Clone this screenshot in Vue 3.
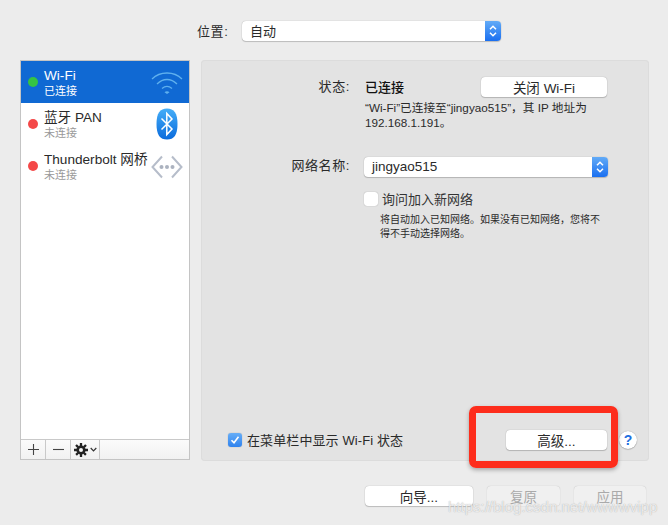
<script setup>
const services = [
  { id: 'wifi', name: 'Wi-Fi', status: '已连接', on: true, active: true },
  { id: 'bt', name: '蓝牙 PAN', status: '未连接', on: false, active: false },
  { id: 'bridge', name: 'Thunderbolt 网桥', status: '未连接', on: false, active: false }
]
</script>

<template>
  <div class="window">
    <div class="location">
      <span class="location-label">位置:</span>
      <div class="select location-select">
        <span class="select-text">自动</span>
        <span class="stepper">
          <svg width="10" height="14" viewBox="0 0 10 14"><path d="M2 5.2 5 2.2 8 5.2M2 8.8 5 11.8 8 8.8" fill="none" stroke="#fff" stroke-width="1.5" /></svg>
        </span>
      </div>
    </div>

    <div class="main">
      <div class="sidebar">
        <ul class="services">
          <li v-for="s in services" :key="s.id" class="service" :class="{ active: s.active }">
            <span class="dot" :class="{ on: s.on }"></span>
            <div class="service-text">
              <div class="service-name">{{ s.name }}</div>
              <div class="service-status">{{ s.status }}</div>
            </div>
            <span class="service-icon">
              <svg v-if="s.id === 'wifi'" width="32" height="26" viewBox="0 0 32 26">
                <g fill="none" stroke="#5fb0ee" stroke-width="1.3">
                  <path d="M1 10C9 2 23 2 31 10" />
                  <path d="M6 15C12 9 20 9 26 15" />
                  <path d="M11 19.5C14 17 18 17 21 19.5" />
                </g>
                <path d="M13.5 23.2C15 22 17 22 18.5 23.2L16 25Z" fill="#5fb0ee" />
              </svg>
              <svg v-else-if="s.id === 'bt'" width="22" height="32" viewBox="0 0 22 32">
                <defs>
                  <linearGradient id="btFill" x1="0" y1="0" x2="0" y2="1">
                    <stop offset="0" stop-color="#45aef8" />
                    <stop offset="1" stop-color="#0a6bdc" />
                  </linearGradient>
                </defs>
                <path d="M11 .5C18 .5 21.5 5 21.5 16S18 31.5 11 31.5.5 27 .5 16 4 .5 11 .5Z" fill="url(#btFill)" />
                <path d="M5.5 10.5 16 21 10.8 26.5V5.5L16 11 5.5 21.5" fill="none" stroke="#fff" stroke-width="1.5" />
              </svg>
              <svg v-else class="bridge-icon" width="32" height="24" viewBox="0 0 32 24">
                <path d="M11 1.5 1.5 12 11 22.5M21 1.5 30.5 12 21 22.5" fill="none" stroke="#b6bdca" stroke-width="2" />
                <circle cx="10.5" cy="12" r="2" fill="#abb2bf" />
                <circle cx="16" cy="12" r="2" fill="#abb2bf" />
                <circle cx="21.5" cy="12" r="2" fill="#abb2bf" />
              </svg>
            </span>
          </li>
        </ul>
        <div class="toolbar">
          <span class="tool tool-small">
            <svg width="11" height="11" viewBox="0 0 11 11"><path d="M5.5 0V11M0 5.5H11" stroke="#444" stroke-width="1.1" /></svg>
          </span>
          <span class="tool tool-small">
            <svg width="11" height="11" viewBox="0 0 11 11"><path d="M0 5.5H11" stroke="#444" stroke-width="1.1" /></svg>
          </span>
          <span class="tool tool-gear">
            <svg width="14" height="14" viewBox="0 0 14 14">
              <circle cx="7" cy="7" r="3.3" fill="none" stroke="#222" stroke-width="2.6" />
              <path d="M7 0V14M0 7H14M2 2 12 12M12 2 2 12" stroke="#222" stroke-width="2.3" stroke-dasharray="3 8 3" />
            </svg>
            <svg width="7" height="5" viewBox="0 0 7 5"><path d="M.7 1 3.5 3.8 6.3 1" fill="none" stroke="#333" stroke-width="1.2" /></svg>
          </span>
        </div>
      </div>

      <div class="panel">
        <div class="form">
          <span class="field-label status-label">状态:</span>
          <div class="status-line">
            <span class="status-value">已连接</span>
            <button class="btn wifi-btn">关闭 Wi-Fi</button>
          </div>
          <p class="status-desc">“Wi-Fi”已连接至“jingyao515”&#65292;其 IP 地址为<br />192.168.1.191。</p>

          <span class="field-label network-label">网络名称:</span>
          <div class="select network-select">
            <span class="select-text network-text">jingyao515</span>
            <span class="stepper">
              <svg width="10" height="14" viewBox="0 0 10 14"><path d="M2 5.2 5 2.2 8 5.2M2 8.8 5 11.8 8 8.8" fill="none" stroke="#fff" stroke-width="1.5" /></svg>
            </span>
          </div>

          <div class="ask">
            <span class="checkbox"></span>
            <span class="ask-text">询问加入新网络</span>
          </div>
          <p class="ask-desc">将自动加入已知网络。如果没有已知网络&#65292;您将不<br />得不手动选择网络。</p>
        </div>

        <div class="panel-bottom">
          <span class="checkbox checked">
            <svg width="10" height="10" viewBox="0 0 10 10"><path d="M1.5 5.2 4 7.8 8.5 1.8" fill="none" stroke="#fff" stroke-width="1.6" /></svg>
          </span>
          <span class="menubar-text">在菜单栏中显示 Wi-Fi 状态</span>
          <button class="btn advanced-btn">高级...</button>
          <span class="help">?</span>
        </div>
      </div>
    </div>

    <div class="actions">
      <button class="btn wizard-btn">向导...</button>
      <button class="btn revert-btn" disabled>复原</button>
      <button class="btn apply-btn" disabled>应用</button>
    </div>

    <div class="highlight"></div>
    <div class="watermark">https://blog.csdn.net/wwwwvipp</div>
  </div>
</template>

<style>
html, body {
  margin: 0;
  background: #ececec;
}
</style>

<style scoped>
.window {
  position: relative;
  box-sizing: border-box;
  width: 668px;
  height: 525px;
  overflow: hidden;
  background: #ececec;
  color: #2a2a2a;
  font-family: "Liberation Sans", "Noto Sans CJK SC", sans-serif;
  font-size: 13px;
}

.location {
  display: flex;
  align-items: center;
  height: 20px;
  padding: 21px 0 0 197px;
}

.location-label {
  width: 45px;
  padding-bottom: 2px;
  font-size: 13px;
  letter-spacing: .6px;
}

.select {
  box-sizing: border-box;
  display: flex;
  align-items: center;
  justify-content: space-between;
  height: 20px;
  background: #fff;
  border-radius: 4px;
  box-shadow: 0 0 1px rgba(0, 0, 0, .35), 0 1px 1px rgba(0, 0, 0, .18);
}

.location-select {
  width: 259px;
}

.select-text {
  padding-left: 8px;
  padding-bottom: 2px;
  font-size: 13px;
}

.network-text {
  padding-bottom: 1px;
  font-size: 13.5px;
}

.stepper {
  display: flex;
  align-items: center;
  justify-content: center;
  width: 16px;
  height: 20px;
  border-radius: 0 4px 4px 0;
  background: linear-gradient(#62abf7, #1a6ff0);
}

.main {
  display: flex;
  gap: 11px;
  padding: 19px 0 0 20px;
}

.sidebar {
  box-sizing: border-box;
  display: flex;
  flex-direction: column;
  width: 170px;
  height: 400px;
  background: #fff;
  border: 1px solid #c4c4c4;
}

.services {
  flex: 1;
  margin: 0;
  padding: 0;
  list-style: none;
}

.service {
  display: flex;
  align-items: center;
  height: 42px;
  padding-left: 7px;
}

.service.active {
  background: #1069d3;
  color: #fff;
}

.dot {
  flex: none;
  width: 10px;
  height: 10px;
  margin-right: 6px;
  border-radius: 50%;
  background: #f44848;
}

.dot.on {
  background: #35c343;
}

.service-text {
  flex: 1;
  min-width: 0;
  padding-top: 1px;
  white-space: nowrap;
}

.service-name {
  font-size: 13.6px;
  line-height: 16px;
}

.service-status {
  margin-top: 1px;
  font-size: 11px;
  line-height: 13px;
  color: #999;
}

.active .service-status {
  color: #fff;
}

.service-icon {
  flex: none;
  display: flex;
  justify-content: center;
  width: 32px;
  margin-right: 6px;
}

.bridge-icon {
  margin-top: 1px;
}

.toolbar {
  box-sizing: border-box;
  display: flex;
  height: 20px;
  border-top: 1px solid #c9c9c9;
  background: linear-gradient(#fbfbfb, #f1f1f1);
}

.tool {
  box-sizing: border-box;
  display: flex;
  align-items: center;
  justify-content: center;
  border-right: 1px solid #c9c9c9;
}

.tool-small {
  width: 25px;
}

.tool-gear {
  gap: 2px;
  width: 29px;
}

.panel {
  box-sizing: border-box;
  display: flex;
  flex-direction: column;
  justify-content: space-between;
  width: 448px;
  height: 401px;
  background: #e3e3e3;
  border-radius: 4px;
  box-shadow: inset 0 0 0 1px #dcdcdc;
}

.form {
  display: grid;
  grid-template-columns: 149px 1fr;
  column-gap: 14px;
  padding-top: 17px;
}

.field-label {
  text-align: right;
  letter-spacing: .6px;
}

.status-label {
  line-height: 20px;
}

.status-line {
  display: flex;
  align-items: center;
  justify-content: space-between;
  width: 243px;
  height: 20px;
}

.status-value {
  margin-left: 1px;
  padding-bottom: 2px;
  font-size: 13px;
  font-weight: 500;
  color: #111;
}

.status-desc {
  grid-column: 2;
  margin: 3px 0 0 1px;
  font-size: 11.7px;
  line-height: 15px;
  white-space: nowrap;
}

.network-label {
  margin-top: 27px;
  line-height: 18px;
}

.network-select {
  width: 244px;
  margin-top: 27px;
}

.ask {
  grid-column: 2;
  display: flex;
  align-items: center;
  gap: 4px;
  margin-top: 14px;
  height: 16px;
}

.ask-text {
  padding-bottom: 2px;
  font-size: 13px;
  color: #333;
}

.ask-desc {
  grid-column: 2;
  margin: 6px 0 0 16px;
  font-size: 10px;
  line-height: 14px;
  white-space: nowrap;
}

.checkbox {
  box-sizing: border-box;
  flex: none;
  display: flex;
  align-items: center;
  justify-content: center;
  width: 14px;
  height: 14px;
  background: #fff;
  border-radius: 3px;
  box-shadow: 0 0 1px rgba(0, 0, 0, .4);
}

.checkbox.checked {
  background: linear-gradient(#67aef7, #2f82ee);
}

.panel-bottom {
  display: flex;
  align-items: center;
  height: 20px;
  padding: 0 12px 11px 27px;
}

.menubar-text {
  margin-left: 5px;
  padding-bottom: 2px;
  font-size: 13px;
  letter-spacing: .1px;
  white-space: nowrap;
}

.btn {
  box-sizing: border-box;
  height: 20px;
  padding: 0 0 2px;
  border: 0;
  border-radius: 4px;
  background: #fff;
  box-shadow: 0 0 1px rgba(0, 0, 0, .35), 0 1px 1px rgba(0, 0, 0, .18);
  color: #2a2a2a;
  font-family: inherit;
  font-size: 13.5px;
}

.btn:disabled {
  background: #f0f0f0;
  color: #aaa;
  box-shadow: 0 0 1px rgba(0, 0, 0, .25);
}

.wifi-btn {
  width: 126px;
}

.advanced-btn {
  width: 101px;
  margin-left: auto;
}

.help {
  box-sizing: border-box;
  display: flex;
  align-items: center;
  justify-content: center;
  width: 18px;
  height: 18px;
  margin-left: 12px;
  border-radius: 50%;
  background: #fff;
  box-shadow: 0 0 1px rgba(0, 0, 0, .4), 0 1px 1px rgba(0, 0, 0, .15);
  color: #1f6fe0;
  font-size: 14px;
  font-weight: 700;
}

.actions {
  display: flex;
  padding: 25px 0 0 365px;
}

.wizard-btn {
  width: 108px;
}

.revert-btn {
  width: 73px;
  margin-left: 14px;
}

.apply-btn {
  width: 72px;
  margin-left: 14px;
}

.highlight {
  position: absolute;
  left: 469px;
  top: 406px;
  box-sizing: border-box;
  width: 149px;
  height: 62px;
  border: 7px solid #fd2d1c;
  border-radius: 7px;
  box-shadow: 0 2px 4px rgba(0, 0, 0, .3);
}

.watermark {
  position: absolute;
  left: 448px;
  top: 497px;
  color: rgba(255, 255, 255, .75);
  font-size: 15px;
  line-height: 20px;
  text-shadow: 0 0 1px rgba(110, 110, 110, .6);
  white-space: nowrap;
}
</style>
